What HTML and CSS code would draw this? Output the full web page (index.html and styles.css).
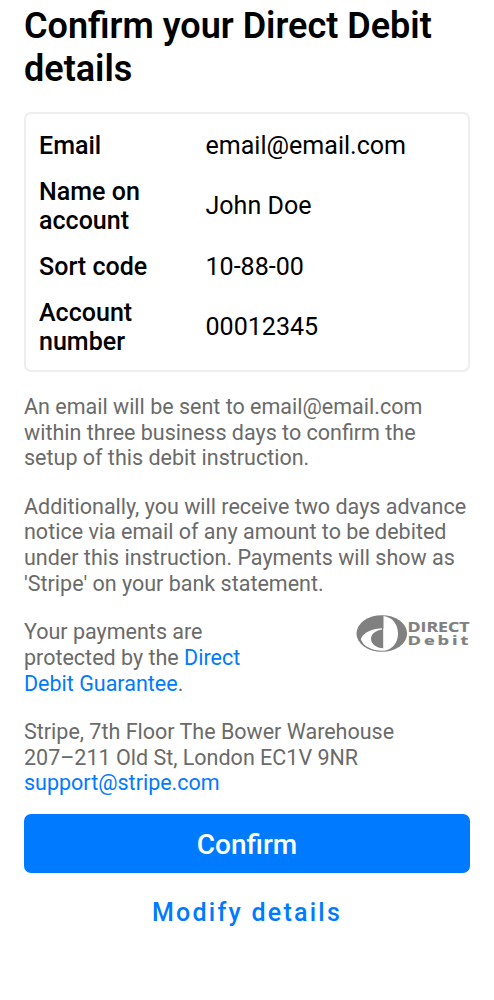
FILE: index.html
```html
<!DOCTYPE html>
<html lang="en">
<head>
<meta charset="utf-8">
<title>Confirm your Direct Debit details</title>
<link rel="stylesheet" href="styles.css">
</head>
<body>
<main class="page">
  <h1 class="title">Confirm your Direct Debit details</h1>
  <dl class="details">
    <div class="row"><dt>Email</dt><dd>email@email.com</dd></div>
    <div class="row"><dt>Name on account</dt><dd>John Doe</dd></div>
    <div class="row"><dt>Sort code</dt><dd>10-88-00</dd></div>
    <div class="row"><dt>Account number</dt><dd>00012345</dd></div>
  </dl>
  <div class="notes">
    <p>An email will be sent to email@email.com<br>within three business days to confirm the<br>setup of this debit instruction.</p>
    <p>Additionally, you will receive two days advance<br>notice via email of any amount to be debited<br>under this instruction. Payments will show as<br>'Stripe' on your bank statement.</p>
    <div class="protection">
      <p>Your payments are<br>protected by the <a href="#">Direct<br>Debit Guarantee</a>.</p>
      <svg class="logo" viewBox="0 0 114 38" role="img" aria-label="Direct Debit">
        <ellipse class="ink" cx="25.8" cy="18.5" rx="25.3" ry="18.3"/>
        <path class="paper" d="M27.500 1C36.500 2 42 9.500 42 18.500S36.500 35 27.500 35.700C17 36 6.800 31.500 4.800 24C7.500 17.500 16 13.500 27.500 13.300Z"/>
        <path class="ink" d="M27.200 12.500V33.300C20.500 33 15 29 15 24C15 19 19.500 15.500 26 14.500V12.500Z"/>
        <text class="brand" x="51.500" y="17.400" textLength="62" lengthAdjust="spacingAndGlyphs">DIRECT</text>
        <text class="brand debit" transform="translate(51.500 29.500) scale(1.4 1)" textLength="43.500">Debit</text>
      </svg>
    </div>
    <p>Stripe, 7th Floor The Bower Warehouse<br>207–211 Old St, London EC1V 9NR<br><a href="#">support@stripe.com</a></p>
  </div>
  <button class="confirm">Confirm</button>
  <button class="modify">Modify details</button>
</main>
</body>
</html>
```
FILE: styles.css
```css
* { box-sizing: border-box; }
body { margin: 0; background: #fff; color: #000; font-family: Roboto, sans-serif; }
.page { display: flex; flex-direction: column; padding: 5px 24px 0; }
.title { margin: 0; font-size: 36px; font-weight: 600; line-height: 42.5px; }
.details { margin: 22px 0 0; height: 260px; border: 2px solid #eee; border-radius: 7px; padding: 17px 13px 0; display: flex; flex-direction: column; gap: 16.7px; font-size: 25.05px; line-height: 29.2px; }
.row { display: grid; grid-template-columns: 166.5px 1fr; align-items: center; }
.row dt { font-weight: 500; padding-right: 50px; }
.row dd { margin: 0; }
.notes { margin-top: 22px; display: flex; flex-direction: column; gap: 22.6px; font-size: 21.5px; line-height: 25.7px; color: #6a6a6a; }
.notes p { margin: 0; white-space: nowrap; }
.notes a { color: #007aff; text-decoration: none; }
.protection { display: flex; justify-content: space-between; align-items: flex-start; }
.logo { width: 114px; height: 38px; margin: -4px 0 0; }
.ink { fill: #808080; }
.paper { fill: #fff; }
.brand { font: 700 13.5px "Open Sans", sans-serif; fill: #808080; stroke: #808080; stroke-width: .2px; }
.debit { font-size: 13px; }
button { border: 0; font-family: inherit; font-weight: 500; padding: 0; }
.confirm { margin-top: 18.5px; height: 58.5px; border-radius: 7px; background: #007aff; color: #fff; font-size: 28px; padding-top: 2px; }
.modify { margin-top: 24px; height: 32px; background: none; color: #007aff; font-size: 25px; letter-spacing: 2.25px; }
```
